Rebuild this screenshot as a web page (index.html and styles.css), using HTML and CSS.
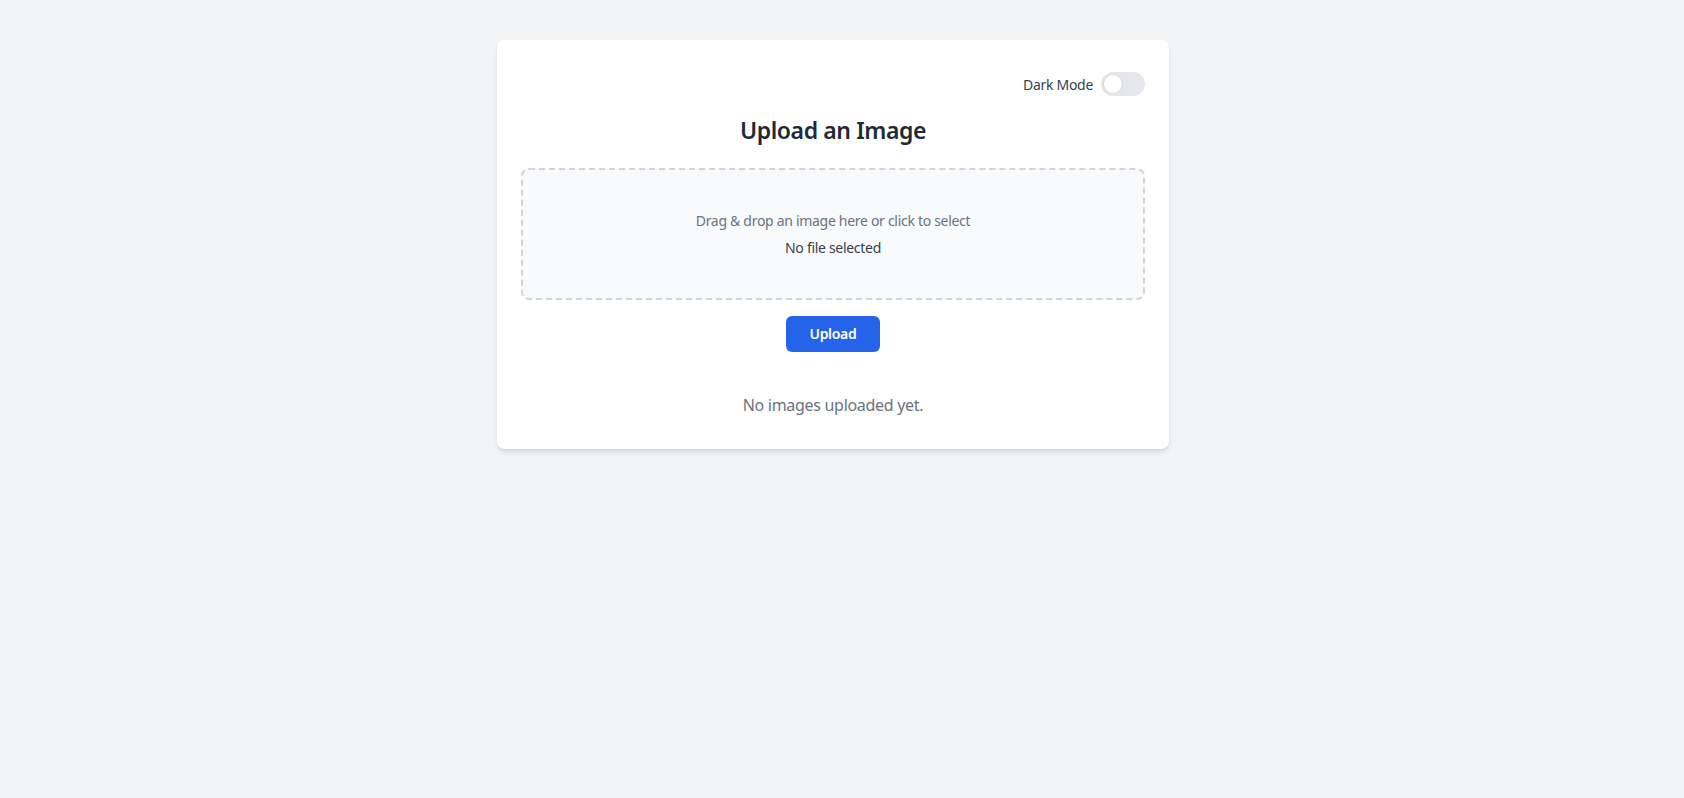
FILE: index.html
```html
<!DOCTYPE html>
<html lang="en">
<head>
<meta charset="utf-8">
<title>Upload an Image</title>
<link rel="stylesheet" href="styles.css">
</head>
<body>
<main class="page">
  <section class="card">
    <div class="toolbar">
      <span class="toggle-label">Dark Mode</span>
      <button class="toggle" type="button" aria-label="Dark Mode"><span class="knob"></span></button>
    </div>
    <h1 class="title">Upload an Image</h1>
    <div class="dropzone">
      <p class="hint">Drag &amp; drop an image here or click to select</p>
      <p class="file">No file selected</p>
    </div>
    <div class="actions">
      <button class="upload" type="button">Upload</button>
    </div>
    <p class="empty">No images uploaded yet.</p>
  </section>
</main>
</body>
</html>
```

FILE: styles.css
```css
* { box-sizing: border-box; }
html, body { margin: 0; padding: 0; }
body {
  background: #f3f4f6;
  font-family: "Noto Sans", "Open Sans", "Liberation Sans", sans-serif;
  color: #1f2937;
  min-height: 798px;
  letter-spacing: -0.3px;
}
.page {
  width: calc(100% - 18px);
  padding-top: 40px;
}
.card {
  width: 672px;
  margin: 0 auto;
  background: #ffffff;
  border-radius: 8px;
  box-shadow: 0 4px 6px -1px rgba(0,0,0,0.1), 0 2px 4px -2px rgba(0,0,0,0.1);
  padding: 24px 24px 32px;
}
.toolbar {
  display: flex;
  justify-content: flex-end;
  align-items: center;
  gap: 8px;
  margin-top: 8px;
  height: 24px;
  margin-bottom: 18px;
}
.toggle-label {
  font-size: 14px;
  color: #374151;
}
.toggle {
  width: 44px;
  height: 24px;
  border-radius: 12px;
  background: #e5e7eb;
  border: none;
  padding: 2px;
  display: flex;
  align-items: center;
}
.knob {
  width: 20px;
  height: 20px;
  border-radius: 50%;
  background: #ffffff;
  border: 1px solid #d1d5db;
}
.title {
  margin: 0 0 22px;
  font-size: 23px;
  line-height: 32px;
  font-weight: 600;
  letter-spacing: -0.4px;
  text-align: center;
  color: #1f2937;
}
.dropzone {
  border: 2px dashed #d1d5db;
  border-radius: 8px;
  background: #f9fafb;
  padding: 41px 16px 40px;
  text-align: center;
}
.hint {
  margin: 0;
  font-size: 14px;
  line-height: 20px;
  color: #6b7280;
}
.file {
  margin: 7px 0 0;
  font-size: 14px;
  line-height: 20px;
  color: #374151;
}
.actions {
  display: flex;
  justify-content: center;
  margin-top: 16px;
}
.upload {
  background: #2563eb;
  color: #ffffff;
  border: none;
  border-radius: 6px;
  padding: 8px 24px;
  font-family: inherit;
  font-size: 14px;
  line-height: 20px;
  font-weight: 600;
  letter-spacing: -0.3px;
}
.empty {
  margin: 41px 0 0;
  text-align: center;
  font-size: 16px;
  line-height: 24px;
  color: #6b7280;
}
```
